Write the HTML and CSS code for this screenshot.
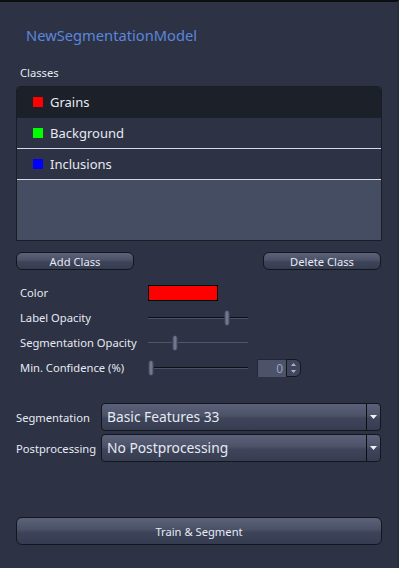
FILE: index.html
```html
<!DOCTYPE html>
<html lang="en">
<head>
  <meta charset="UTF-8">
  <title>Segmentation</title>
  <link rel="stylesheet" href="styles.css">
</head>
<body>
  <div class="panel">
    <h1 class="title">NewSegmentationModel</h1>
    <p class="caption">Classes</p>
    <ul class="classes">
      <li class="cls selected"><span class="swatch red"></span>Grains</li>
      <li class="cls"><span class="swatch green"></span>Background</li>
      <li class="cls"><span class="swatch blue"></span>Inclusions</li>
    </ul>
    <div class="btn-row">
      <button class="btn small">Add Class</button>
      <button class="btn small">Delete Class</button>
    </div>
    <div class="props">
      <div class="prop">
        <span class="prop-label">Color</span>
        <span class="color-box"></span>
      </div>
      <div class="prop">
        <span class="prop-label">Label Opacity</span>
        <span class="slider"><span class="track"></span><span class="handle" style="left: 76px"></span></span>
      </div>
      <div class="prop">
        <span class="prop-label">Segmentation Opacity</span>
        <span class="slider"><span class="track light"></span><span class="handle" style="left: 24px"></span></span>
      </div>
      <div class="prop">
        <span class="prop-label">Min. Confidence (%)</span>
        <span class="slider"><span class="track"></span><span class="handle" style="left: 0"></span></span>
        <span class="spin">
          <span class="spin-value">0</span>
          <span class="spin-arrows">
            <svg width="7" height="14" viewBox="0 0 7 14"><path d="M1 5 L3.5 2 L6 5 Z M1 9 L3.5 12 L6 9 Z" fill="#aab2c8"/></svg>
          </span>
        </span>
      </div>
    </div>
    <div class="combos">
      <div class="combo-row">
        <span class="combo-label">Segmentation</span>
        <div class="combo">
          <span class="combo-text">Basic Features 33</span>
          <span class="combo-arrow"><svg width="7" height="4" viewBox="0 0 7 4"><path d="M0 0 L7 0 L3.5 4 Z" fill="#f0f2f8"/></svg></span>
        </div>
      </div>
      <div class="combo-row">
        <span class="combo-label">Postprocessing</span>
        <div class="combo">
          <span class="combo-text">No Postprocessing</span>
          <span class="combo-arrow"><svg width="7" height="4" viewBox="0 0 7 4"><path d="M0 0 L7 0 L3.5 4 Z" fill="#f0f2f8"/></svg></span>
        </div>
      </div>
    </div>
    <button class="btn wide">Train &amp; Segment</button>
  </div>
</body>
</html>
```
FILE: styles.css
```css
*{
  padding: 0;
  margin: 0;
  box-sizing: border-box;
}
body{
  background: #2d3244;
  font-family: "Noto Sans", "Open Sans", sans-serif;
  color: #e6eaf3;
}
.panel{
  width: 399px;
  height: 568px;
  border-top: 2px solid #0c0d11;
  border-right: 2px solid #23273550;
  background: #2d3244;
  padding: 0 16px;
}
.title{
  font-weight: normal;
  font-size: 14.7px;
  line-height: 20px;
  color: #5a87de;
  padding: 23px 0 0 10px;
}
.caption{
  font-size: 11.2px;
  line-height: 16px;
  margin-top: 20px;
  padding-left: 4px;
}
.classes{
  list-style: none;
  margin-top: 5px;
  width: 366px;
  height: 155px;
  border: 1px solid #1a1d26;
  border-radius: 4px 4px 0 0;
  background: #454d63;
  overflow: hidden;
}
.cls{
  display: flex;
  align-items: center;
  height: 31px;
  padding-left: 16px;
  font-size: 13px;
  background: #2d3244;
  border-bottom: 1px solid #d3d9e6;
}
.cls.selected{
  background: #1c2029;
  border-bottom-color: #1c2029;
}
.swatch{
  width: 10px;
  height: 10px;
  margin-right: 7px;
}
.red{ background: #ff0000; }
.green{ background: #00ff00; }
.blue{ background: #0000ff; }
.btn-row{
  display: flex;
  justify-content: space-between;
  margin-top: 11px;
}
.btn{
  font-family: inherit;
  color: #e6eaf3;
  font-size: 11.2px;
  border: 1px solid #14161d;
  border-radius: 6px;
  background: linear-gradient(#5c6379, #4a5167 45%, #3d4459 55%, #363c50);
  cursor: pointer;
}
.btn.small{
  width: 118px;
  height: 18px;
  line-height: 15px;
}
.props{
  margin-top: 10px;
  padding-left: 4px;
}
.prop{
  display: flex;
  align-items: center;
  height: 25px;
  font-size: 11.2px;
}
.prop-label{
  width: 128px;
}
.color-box{
  width: 70px;
  height: 16px;
  background: #ff0000;
  border: 1px solid #000;
}
.slider{
  position: relative;
  width: 100px;
  height: 16px;
}
.track{
  position: absolute;
  left: 0;
  right: 0;
  top: 7px;
  height: 2px;
  background: #0d0f14;
  border-bottom: 1px solid #4b5268;
}
.track.light{
  background: #50576d;
  border-bottom: none;
  height: 1px;
}
.handle{
  position: absolute;
  top: 0;
  width: 6px;
  height: 16px;
  border-radius: 3px;
  border: 1px solid #3a4052;
  background: linear-gradient(90deg, #4e556b, #7b839b 50%, #4e556b);
}
.spin{
  display: flex;
  margin-left: 9px;
  height: 18px;
}
.spin-value{
  width: 29px;
  background: #4b526a;
  border-top: 1px solid #232735;
  border-left: 1px solid #232735;
  color: #98a2bf;
  text-align: right;
  padding-right: 3px;
  line-height: 17px;
  font-size: 12px;
}
.spin-arrows{
  display: flex;
  align-items: center;
  justify-content: center;
  width: 15px;
  background: #40465b;
  border: 1px solid #14161d;
  border-radius: 0 6px 6px 0;
}
.combos{
  margin-top: 23px;
  display: flex;
  flex-direction: column;
  gap: 3px;
}
.combo-row{
  display: flex;
  align-items: center;
}
.combo-label{
  width: 85px;
  font-size: 11.2px;
}
.combo{
  flex: 1;
  display: flex;
  height: 28px;
  border: 1px solid #14161d;
  border-radius: 4px;
  background: linear-gradient(#5a6178, #4c5369 45%, #3e455a 55%, #373d51);
}
.combo-text{
  flex: 1;
  font-size: 13.8px;
  line-height: 26px;
  padding-left: 5px;
}
.combo-arrow{
  width: 14px;
  border-left: 1px solid #0d0f14;
  display: flex;
  align-items: center;
  justify-content: center;
}
.btn.wide{
  display: block;
  width: 366px;
  height: 28px;
  margin-top: 55px;
}
```
